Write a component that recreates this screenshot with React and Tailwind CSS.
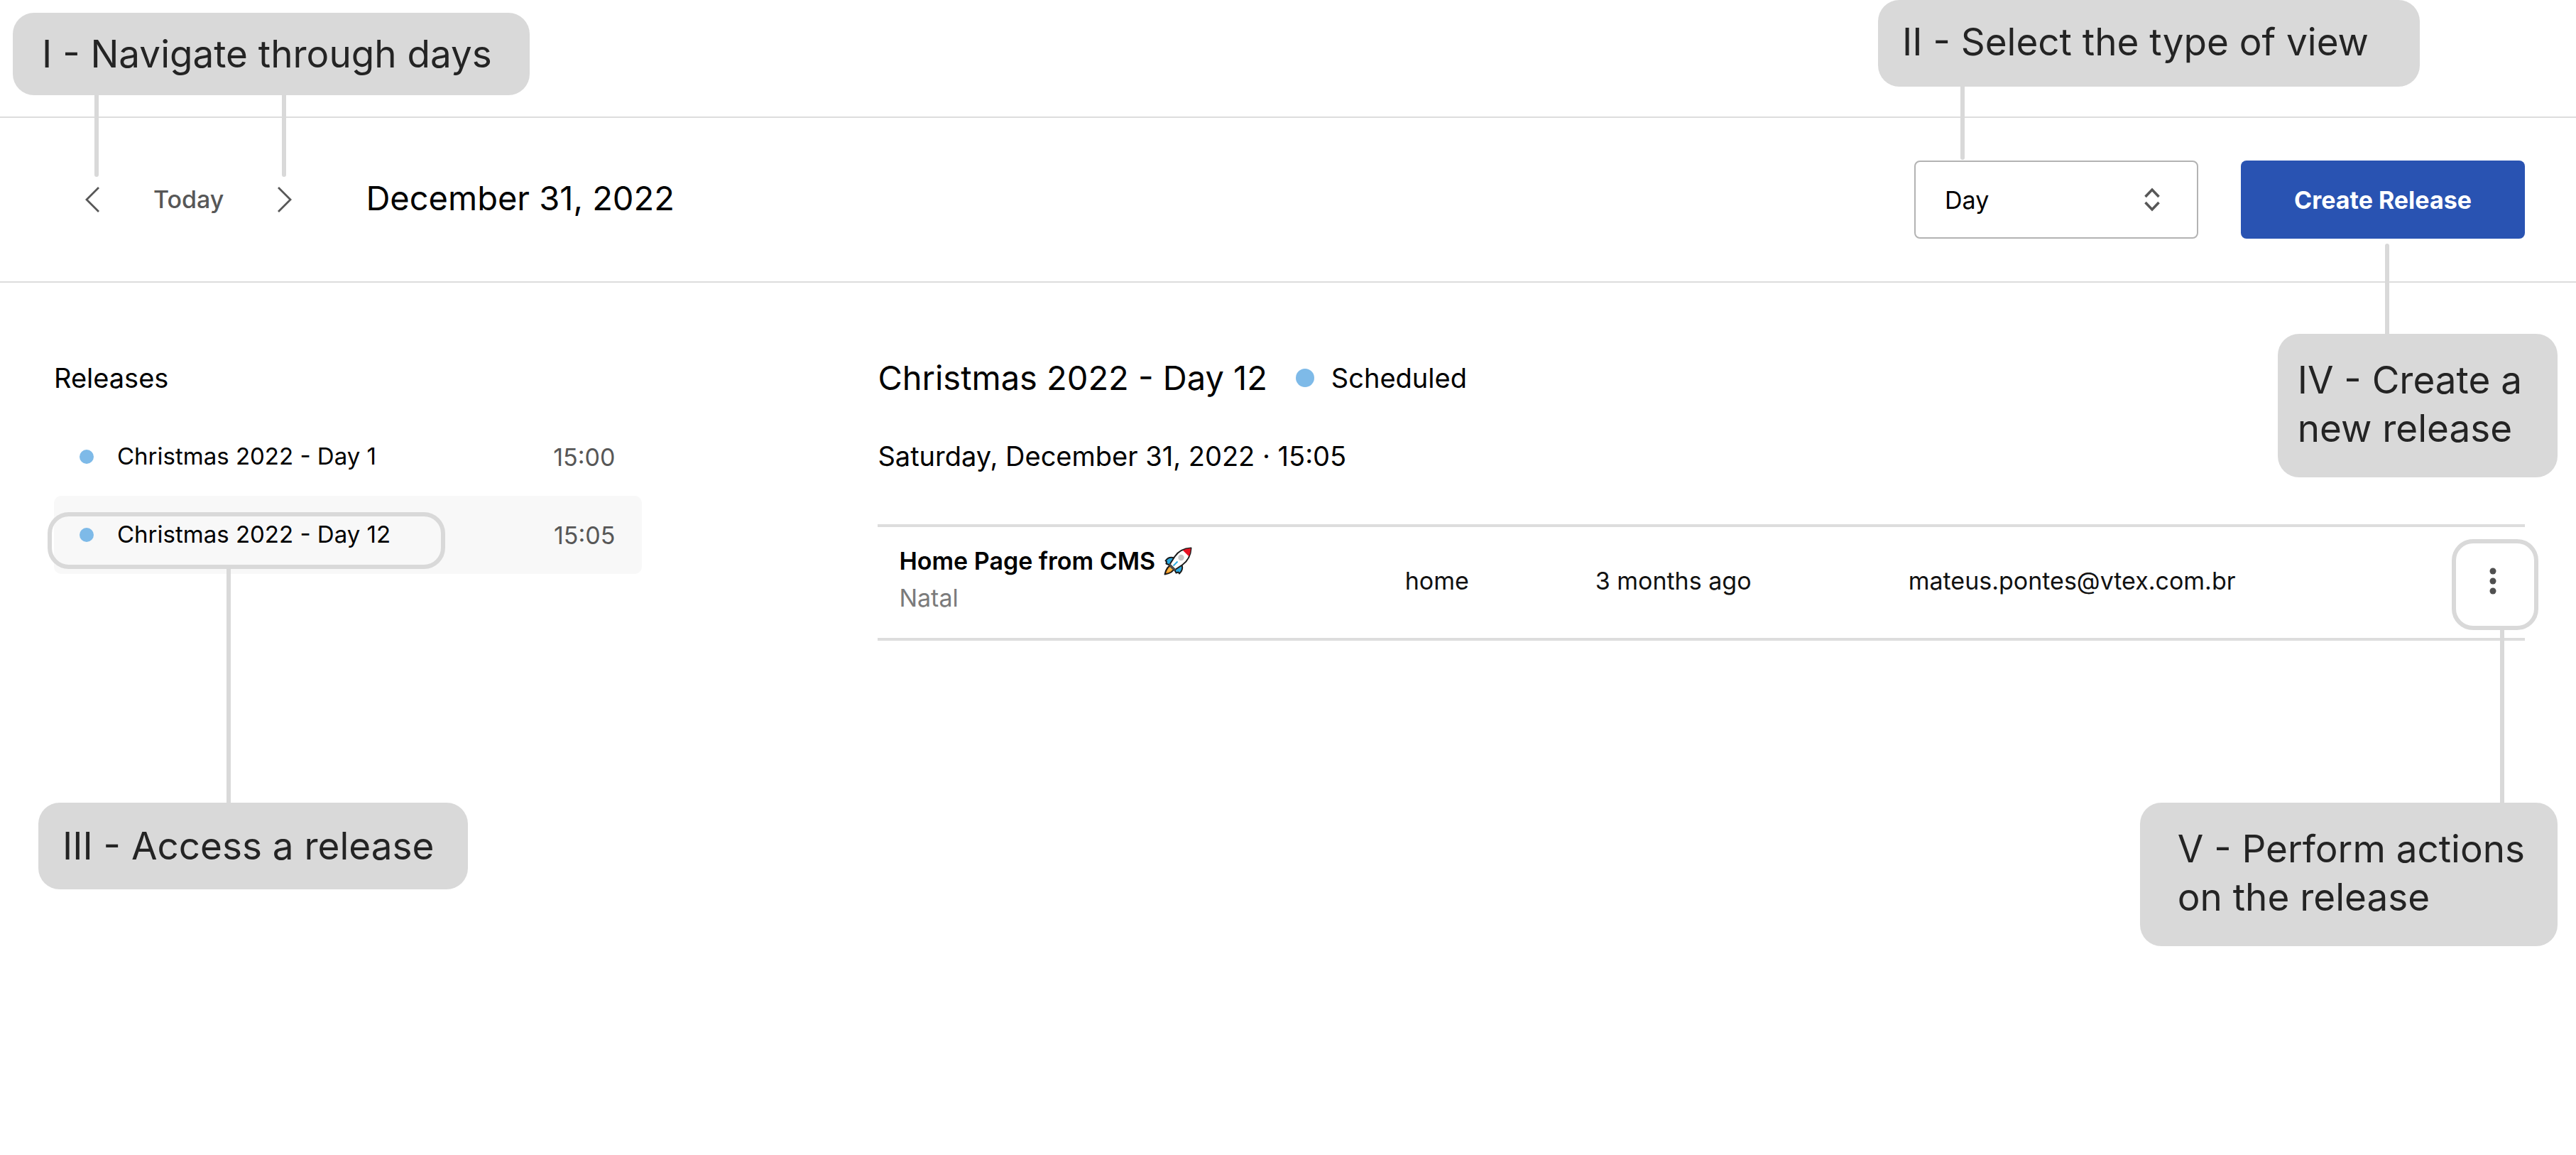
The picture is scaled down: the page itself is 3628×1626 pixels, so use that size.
const releases = [
  { name: "Christmas 2022 - Day 1", time: "15:00", selected: false },
  { name: "Christmas 2022 - Day 12", time: "15:05", selected: true },
];

function Chevron({ d }) {
  return (
    <svg width="20" height="36" viewBox="0 0 20 36" fill="none" stroke="currentColor" strokeWidth="2.8" aria-hidden="true">
      <path d={d} />
    </svg>
  );
}

function Rocket() {
  return (
    <svg className="inline-block shrink-0" width="40" height="40" viewBox="0 0 40 40" strokeLinejoin="round" role="img" aria-label="rocket">
      <path d="M11 25C5.500 27 3 32 1.500 38.500C8 37.500 13.500 35 15.500 29.500Z" fill="#f7941d" stroke="#1a1a1a" strokeWidth="2" />
      <path d="M9.500 28.500C6.500 30 5 33 4.500 35.500C7.500 35 10.500 33.500 12 31Z" fill="#fcb846" />
      <path d="M15 15.500C10 14 5.500 15 2.500 19.500L4 20.500L3.500 23.500L9.500 26Z" fill="#29abe2" stroke="#1a1a1a" strokeWidth="2" />
      <path d="M25.500 25C27 30 25.500 34.500 22 37.500L20.500 35.500L17.500 36.500L14.500 31Z" fill="#29abe2" stroke="#1a1a1a" strokeWidth="2" />
      <path d="M38.500 1.500C28 2 20.500 6 15.500 13.500L8.500 24.500L16 32L26.500 25C34 19.500 38 12 38.500 1.500Z" fill="#fff" stroke="#1a1a1a" strokeWidth="2" />
      <path d="M38 2C33.500 2.200 30 3.200 26.800 4.800L35.400 13.200C37 10 37.800 6.500 38 2Z" fill="#e81123" />
      <path d="M8.500 24.500L16 32L12.500 30.500L9.500 27.500Z" fill="#4d4d4d" stroke="#4d4d4d" strokeWidth="2" />
      <circle cx="24.500" cy="15" r="4.200" fill="#c8c8c8" />
      <path d="M19.500 20.500L13.500 26.500" stroke="#29abe2" strokeWidth="1.800" />
    </svg>
  );
}

function Note({ className, children }) {
  return (
    <div className={`absolute rounded-[30px] bg-[#d9d9d9] text-[53px] leading-[68px] text-[#242424] ${className}`}>
      {children}
    </div>
  );
}

function Line({ className }) {
  return <div className={`absolute w-[6px] rounded-full bg-[#d9d9d9] ${className}`} />;
}

function Annotations() {
  return (
    <div className="pointer-events-none absolute inset-0 whitespace-nowrap">
      <Line className="left-[133px] top-[120px] h-[129px]" />
      <Line className="left-[397px] top-[120px] h-[129px]" />
      <Note className="left-[18px] top-[18px] py-[24px] pl-[41px] pr-[53px]">I - Navigate through days</Note>

      <Line className="right-[861px] top-[110px] h-[115px]" />
      <Note className="right-[220px] top-0 pt-[25px] pb-[29px] pl-[34px] pr-[72px]">II - Select the type of view</Note>

      <div className="absolute left-[67px] top-[721px] h-[80px] w-[560px] rounded-[30px] border-[6px] border-[#d9d9d9]" />
      <Line className="left-[319px] top-[798px] h-[340px]" />
      <Note className="left-[54px] top-[1130px] pt-[27px] pb-[27px] pl-[34px] pr-[48px]">III - Access a release</Note>

      <Line className="right-[263px] top-[343px] h-[140px]" />
      <Note className="right-[26px] top-[470px] pt-[31px] pb-[35px] pl-[28px] pr-[50px]">
        IV - Create a
        <br />
        new release
      </Note>

      <div className="absolute right-[53px] top-[759px] h-[128px] w-[122px] rounded-[30px] border-[6px] border-[#d9d9d9]" />
      <Line className="right-[101px] top-[884px] h-[260px]" />
      <Note className="right-[26px] top-[1130px] pt-[31px] pb-[35px] pl-[53px] pr-[46px]">
        V - Perform actions
        <br />
        on the release
      </Note>
    </div>
  );
}

function Header() {
  return (
    <header className="flex items-center justify-between border-b-2 border-[#dddddd] py-[60px] pr-[72px] pl-[120px]">
      <div className="flex items-center">
        <nav aria-label="Days" className="flex items-center gap-[76px] text-[#575757]">
          <button type="button" aria-label="Previous day">
            <Chevron d="M19 1L2 18L19 35" />
          </button>
          <button type="button" className="text-[34px] leading-[48px] font-medium">Today</button>
          <button type="button" aria-label="Next day">
            <Chevron d="M1 1L18 18L1 35" />
          </button>
        </nav>
        <h1 className="ml-[104px] pb-1 text-[47px] leading-[64px]">December 31, 2022</h1>
      </div>
      <div className="flex items-center gap-[60px]">
        <div className="relative flex items-center">
          <select
            aria-label="Type of view"
            defaultValue="Day"
            className="h-[110px] w-[400px] appearance-none rounded-[8px] border-2 border-[#b3b3b3] bg-white pl-[41px] text-[34px]"
          >
            <option>Day</option>
          </select>
          <svg className="pointer-events-none absolute right-[54px]" width="22" height="36" viewBox="0 0 22 36" fill="none" stroke="#575757" strokeWidth="3.6" aria-hidden="true">
            <path d="M1.500 14L11 4L20.500 14M1.500 22L11 32L20.500 22" />
          </svg>
        </div>
        <button type="button" className="h-[110px] w-[400px] rounded-[8px] bg-[#2953b2] text-[34px] font-bold text-white">
          Create Release
        </button>
      </div>
    </header>
  );
}

function Sidebar() {
  return (
    <aside>
      <h2 className="text-[38px] leading-[64px]">Releases</h2>
      <ul className="mt-[24px]">
        {releases.map((r) => (
          <li key={r.name}>
            <button
              type="button"
              className={`flex h-[110px] w-full items-center rounded-[10px] pr-[38px] pl-[36px] text-[33px] ${r.selected ? "bg-[#f8f8f8]" : ""}`}
            >
              <span className="size-[20px] rounded-full bg-[#7ebae8]" />
              <span className="ml-[33px]">{r.name}</span>
              <span className="ml-auto text-[34px] text-[#575757]">{r.time}</span>
            </button>
          </li>
        ))}
      </ul>
    </aside>
  );
}

function Details() {
  return (
    <section>
      <div className="flex items-center leading-[64px]">
        <h2 className="text-[47px]">Christmas 2022 - Day 12</h2>
        <span className="ml-[40px] size-[26px] rounded-full bg-[#7ebae8]" />
        <span className="ml-[24px] text-[38px]">Scheduled</span>
      </div>
      <p className="mt-[54px] text-[38px] leading-[48px]">Saturday, December 31, 2022 · 15:05</p>
      <div className="mt-[72px] border-y-4 border-[#dddddd]">
        <table className="h-[156px] w-full table-fixed text-[34px] leading-[52px] text-[#111111]">
          <tbody>
            <tr>
              <td className="w-[32%] pb-2 pl-[30px]">
                <div className="flex items-center gap-[12px] font-semibold text-black">
                  Home Page from CMS <Rocket />
                </div>
                <div className="text-[#7b7b7b]">Natal</div>
              </td>
              <td className="w-[268px] pb-1">home</td>
              <td className="w-[441px] pb-1">3 months ago</td>
              <td className="pb-1">mateus.pontes@vtex.com.br</td>
              <td className="w-[90px] pb-1">
                <button type="button" aria-label="Release actions" className="flex h-[88px] w-full items-center justify-center">
                  <svg width="10" height="40" viewBox="0 0 10 40" fill="#505050" aria-hidden="true">
                    <circle cx="5" cy="6" r="4.500" />
                    <circle cx="5" cy="20" r="4.500" />
                    <circle cx="5" cy="34" r="4.500" />
                  </svg>
                </button>
              </td>
            </tr>
          </tbody>
        </table>
      </div>
    </section>
  );
}

export default function App() {
  return (
    <div className="relative min-h-screen bg-white font-['Inter',sans-serif] text-black">
      <div className="h-[166px] border-b-2 border-[#dddddd]" />
      <Header />
      <main className="grid grid-cols-[5fr_14fr] gap-[332px] pt-[102px] pr-[72px] pl-[76px]">
        <Sidebar />
        <Details />
      </main>
      <Annotations />
    </div>
  );
}
